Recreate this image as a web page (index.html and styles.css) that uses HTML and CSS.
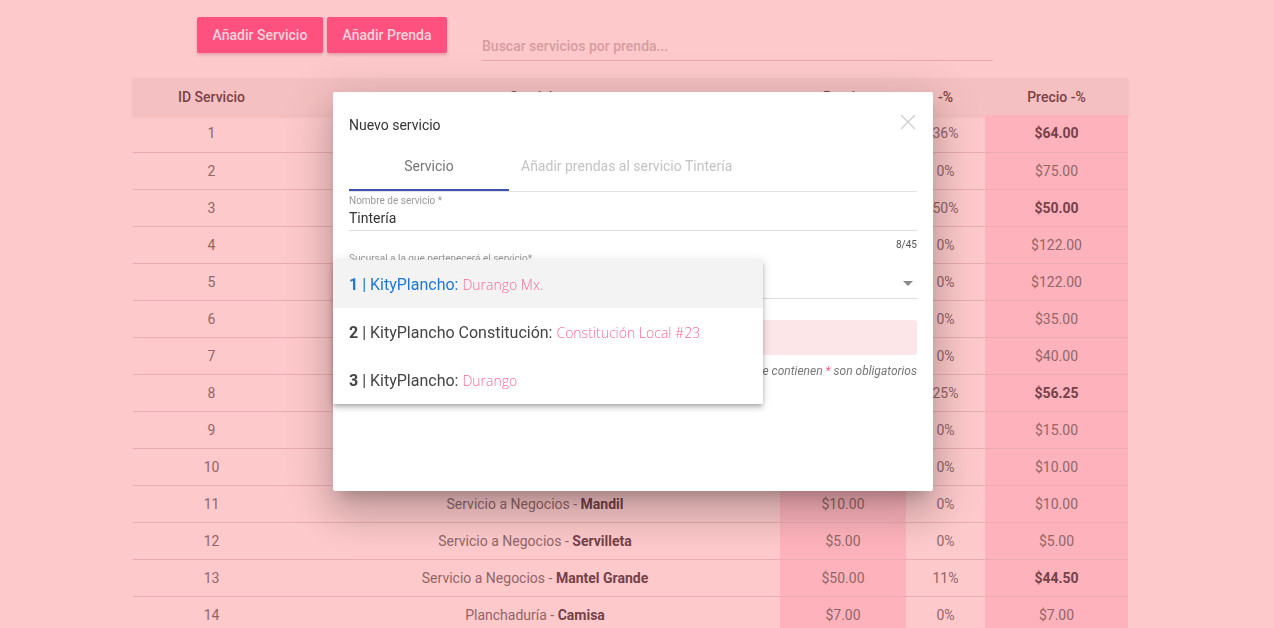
FILE: index.html
```html
<!DOCTYPE html>
<html lang="es">
<head>
<meta charset="utf-8">
<title>Servicios</title>
<link rel="stylesheet" href="styles.css">
</head>
<body>
<div class="page">
  <div class="toolbar">
    <div class="actions">
      <button class="btn">Añadir Servicio</button>
      <button class="btn">Añadir Prenda</button>
    </div>
    <div class="search">
      <input class="search-input" type="text" placeholder="Buscar servicios por prenda...">
    </div>
  </div>

  <table class="grid">
    <colgroup>
      <col class="c-id"><col class="c-serv"><col class="c-price"><col class="c-disc"><col class="c-final">
    </colgroup>
    <thead>
      <tr><th>ID Servicio</th><th>Servicio</th><th>Precio</th><th>-%</th><th>Precio -%</th></tr>
    </thead>
    <tbody>
      <tr><td>1</td><td>Lavandería - <b>Edredón</b></td><td class="price">$100.00</td><td>36%</td><td class="final"><b>$64.00</b></td></tr>
      <tr><td>2</td><td>Lavandería - <b>Cobertor</b></td><td class="price">$75.00</td><td>0%</td><td class="final">$75.00</td></tr>
      <tr><td>3</td><td>Tintorería - <b>Traje</b></td><td class="price">$100.00</td><td>50%</td><td class="final"><b>$50.00</b></td></tr>
      <tr><td>4</td><td>Tintorería - <b>Vestido de Novia</b></td><td class="price">$122.00</td><td>0%</td><td class="final">$122.00</td></tr>
      <tr><td>5</td><td>Tintorería - <b>Vestido de Gala</b></td><td class="price">$122.00</td><td>0%</td><td class="final">$122.00</td></tr>
      <tr><td>6</td><td>Tintorería - <b>Saco</b></td><td class="price">$35.00</td><td>0%</td><td class="final">$35.00</td></tr>
      <tr><td>7</td><td>Tintorería - <b>Abrigo</b></td><td class="price">$40.00</td><td>0%</td><td class="final">$40.00</td></tr>
      <tr><td>8</td><td>Lavandería - <b>Cortinas</b></td><td class="price">$75.00</td><td>25%</td><td class="final"><b>$56.25</b></td></tr>
      <tr><td>9</td><td>Planchaduría - <b>Pantalón</b></td><td class="price">$15.00</td><td>0%</td><td class="final">$15.00</td></tr>
      <tr><td>10</td><td>Planchaduría - <b>Blusa</b></td><td class="price">$10.00</td><td>0%</td><td class="final">$10.00</td></tr>
      <tr><td>11</td><td>Servicio a Negocios - <b>Mandil</b></td><td class="price">$10.00</td><td>0%</td><td class="final">$10.00</td></tr>
      <tr><td>12</td><td>Servicio a Negocios - <b>Servilleta</b></td><td class="price">$5.00</td><td>0%</td><td class="final">$5.00</td></tr>
      <tr><td>13</td><td>Servicio a Negocios - <b>Mantel Grande</b></td><td class="price">$50.00</td><td>11%</td><td class="final"><b>$44.50</b></td></tr>
      <tr><td>14</td><td>Planchaduría - <b>Camisa</b></td><td class="price">$7.00</td><td>0%</td><td class="final">$7.00</td></tr>
    </tbody>
  </table>
</div>

<div class="modal">
  <div class="modal-head">
    <h2 class="modal-title">Nuevo servicio</h2>
    <span class="close" aria-label="Cerrar">
      <svg width="16" height="16" viewBox="0 0 16 16"><path d="M1 1L15 15M15 1L1 15" stroke="#cfcfcf" stroke-width="1.4" fill="none"/></svg>
    </span>
  </div>
  <div class="tabs">
    <div class="tab active">Servicio</div>
    <div class="tab">Añadir prendas al servicio Tintería</div>
  </div>
  <div class="field name">
    <label class="field-label">Nombre de servicio *</label>
    <div class="field-value">Tintería</div>
  </div>
  <div class="counter">8/45</div>
  <div class="field select">
    <label class="field-label">Sucursal a la que pertenecerá el servicio*</label>
    <div class="select-row">
      <span class="select-value"></span>
      <span class="arrow"></span>
    </div>
  </div>
  <div class="notice"></div>
  <p class="footnote">Los campos que contienen <span class="req">*</span> son obligatorios</p>

  <ul class="menu">
    <li class="opt hl"><b>1</b> | KityPlancho: <span class="branch">Durango Mx.</span></li>
    <li class="opt"><b>2</b> | KityPlancho Constitución: <span class="branch">Constitución Local #23</span></li>
    <li class="opt"><b>3</b> | KityPlancho: <span class="branch">Durango</span></li>
  </ul>
</div>
</body>
</html>
```

FILE: styles.css
```css
* { box-sizing: border-box; }

html, body {
  margin: 0;
  padding: 0;
  height: 100%;
  overflow: hidden;
}

body {
  background: #fdc9ca;
  font-family: Roboto, "Liberation Sans", Arial, sans-serif;
  font-size: 14px;
  color: #8e6568;
}

.page {
  width: 995px;
  margin-left: 133px;
}

.toolbar {
  display: flex;
  align-items: flex-start;
  padding-top: 17px;
  height: 78px;
}

.actions {
  display: flex;
  gap: 4px;
  margin-left: 64px;
}

.btn {
  height: 36px;
  padding: 0;
  border: none;
  border-radius: 2px;
  background: #ff5180;
  color: #fdd3dc;
  font-family: Roboto, "Liberation Sans", Arial, sans-serif;
  font-weight: 500;
  font-size: 14px;
  white-space: nowrap;
  box-shadow: 0 2px 3px rgba(150, 40, 70, 0.25);
}

.btn:first-child { width: 126px; }
.btn:last-child { width: 120px; }

.search {
  margin-left: 35px;
  width: 511px;
  padding-top: 16px;
}

.search-input {
  width: 100%;
  height: 28px;
  border: none;
  border-bottom: 1px solid #e5aaae;
  background: transparent;
  font-family: Roboto, "Liberation Sans", Arial, sans-serif;
  font-size: 14px;
  font-weight: 500;
  padding: 0 0 1px;
  outline: none;
}

.search-input::placeholder { color: #d79ca1; }

.grid {
  width: 995px;
  border-collapse: collapse;
  table-layout: fixed;
}

.c-id { width: 157px; }
.c-serv { width: 490px; }
.c-price { width: 126px; }
.c-disc { width: 79px; }
.c-final { width: 143px; }

.grid thead tr {
  background: #f5c0c1;
  box-shadow: 0 2px 3px rgba(150, 70, 75, 0.12);
}

.grid th {
  height: 37px;
  font-weight: 500;
  color: #7c4146;
  text-align: center;
  padding: 0;
}

.grid td {
  height: 37px;
  padding: 0;
  text-align: center;
  border-bottom: 1px solid #eaacb0;
  color: #916669;
}

.grid td b { color: #74424a; font-weight: 700; }

.grid td.price, .grid td.final { background: #feb3bc; }

/* Modal overlay */
.modal {
  position: fixed;
  left: 333px;
  top: 92px;
  width: 600px;
  height: 399px;
  background: #fff;
  border-radius: 2px;
  padding: 0 16px;
  box-shadow: 0 11px 15px -7px rgba(0,0,0,.2), 0 24px 38px 3px rgba(0,0,0,.14), 0 9px 46px 8px rgba(0,0,0,.12);
  color: #333;
}

.modal-head {
  display: flex;
  justify-content: space-between;
  align-items: center;
  padding-top: 18px;
  padding-bottom: 3px;
  height: 50px;
}

.modal-title {
  margin: 0;
  font-size: 14px;
  font-weight: 400;
  color: #333;
  line-height: 24px;
}

.close {
  display: flex;
  margin-top: -6px;
  margin-right: 1px;
}

.tabs {
  display: flex;
  height: 50px;
  border-bottom: 1px solid #e3e3e3;
}

.tab {
  padding: 0 12px;
  min-width: 160px;
  display: flex;
  align-items: center;
  justify-content: center;
  color: #c3c3c3;
  font-size: 14px;
  border-bottom: 2px solid transparent;
}

.tab.active {
  color: #777;
  border-bottom-color: #3f51b5;
}

.field {
  border-bottom: 1px solid #dedede;
}

.field.name { padding-top: 3px; height: 39px; }

.field-label {
  display: block;
  font-size: 10px;
  color: #9a9a9a;
  line-height: 12px;
}

.field-value {
  font-size: 14px;
  line-height: 20px;
  margin-top: 1px;
  color: #333;
}

.counter {
  text-align: right;
  font-size: 10px;
  color: #555;
  line-height: 12px;
  margin-top: 8px;
}

.field.select {
  margin-top: 2px;
  height: 46px;
}

.select-row {
  display: flex;
  justify-content: flex-end;
  align-items: center;
  height: 36px;
}

.arrow {
  width: 0;
  height: 0;
  border-left: 5px solid transparent;
  border-right: 5px solid transparent;
  border-top: 5px solid #8a8a8a;
  margin-right: 4px;
}

.notice {
  margin-top: 21px;
  height: 35px;
  background: #fde6e7;
  border-radius: 3px;
}

.footnote {
  margin: 9px 0 0;
  text-align: right;
  font-style: italic;
  font-size: 12px;
  color: #777;
}

.req { color: #f0607f; }

.menu {
  position: absolute;
  left: 0;
  top: 168px;
  width: 430px;
  margin: 0;
  padding: 0;
  list-style: none;
  background: #fff;
  box-shadow: 0 2px 4px -1px rgba(0,0,0,.2), 0 4px 5px 0 rgba(0,0,0,.14), 0 1px 10px 0 rgba(0,0,0,.12);
}

.opt {
  height: 48px;
  display: flex;
  align-items: center;
  padding: 0 16px;
  font-size: 16px;
  color: #444;
  white-space: pre;
}

.opt b { font-weight: 700; }

.opt.hl {
  background: #f3f3f3;
  color: #1e78d2;
}

.branch {
  font-family: "Open Sans", "DejaVu Sans", sans-serif;
  font-weight: 300;
  font-size: 14px;
  color: #f56b9d;
}
```
